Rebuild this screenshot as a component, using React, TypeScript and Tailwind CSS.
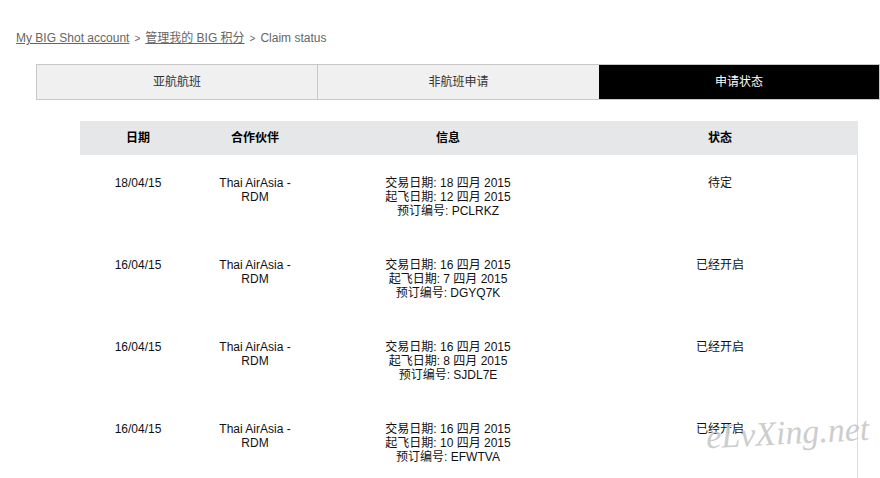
const FONT = { fontFamily: '"Liberation Sans", Arial, "Noto Sans CJK SC", sans-serif' };

const rows = [
  { date: '18/04/15', trade: '18 四月 2015', fly: '12 四月 2015', ref: 'PCLRKZ', status: '待定' },
  { date: '16/04/15', trade: '16 四月 2015', fly: '7 四月 2015', ref: 'DGYQ7K', status: '已经开启' },
  { date: '16/04/15', trade: '16 四月 2015', fly: '8 四月 2015', ref: 'SJDL7E', status: '已经开启' },
  { date: '16/04/15', trade: '16 四月 2015', fly: '10 四月 2015', ref: 'EFWTVA', status: '已经开启' },
];

export default function App() {
  return (
    <div className="relative w-[880px] h-[478px] overflow-hidden bg-white text-[12px] leading-[14px]" style={FONT}>
      <div className="pl-4 pt-[31px] text-[#666]">
        <span className="underline">My BIG Shot account</span>
        <span className="mx-[5px] text-[10px]">&gt;</span>
        <span className="underline">管理我的 BIG 积分</span>
        <span className="mx-[5px] text-[10px]">&gt;</span>
        <span>Claim status</span>
      </div>

      <div className="ml-9 mt-[18px] flex h-[36px] w-[844px] border border-[#c8c8c8]">
        <div className="flex w-[281px] items-center justify-center border-r border-[#c8c8c8] bg-[#f0f0f0] text-[#333]">亚航航班</div>
        <div className="flex w-[281px] items-center justify-center bg-[#f0f0f0] text-[#333]">非航班申请</div>
        <div className="flex flex-1 items-center justify-center bg-black text-white">申请状态</div>
      </div>

      <div className="ml-20 mt-[21px] w-[778px]">
        <div className="grid h-[34px] grid-cols-[116px_118px_268px_276px] items-center bg-[#e6e7e8] font-bold text-black">
          <div className="text-center">日期</div>
          <div className="text-center">合作伙伴</div>
          <div className="text-center">信息</div>
          <div className="text-center">状态</div>
        </div>
        <div className="border-r border-[#dcdcdc]">
          {rows.map((r, i) => (
            <div key={i} className="grid h-[82px] grid-cols-[116px_118px_268px_276px] pt-[21px] text-[#111]">
              <div className="text-center">{r.date}</div>
              <div className="text-center">Thai AirAsia -<br />RDM</div>
              <div className="text-center">
                交易日期: {r.trade}<br />
                起飞日期: {r.fly}<br />
                预订编号: {r.ref}
              </div>
              <div className="text-center">{r.status}</div>
            </div>
          ))}
        </div>
      </div>

      <div
        className="pointer-events-none absolute left-[706px] top-[426px] -rotate-3 text-[34px] italic text-[#c8c8c8] opacity-90"
        style={{ fontFamily: '"Liberation Serif", serif' }}
      >
        eLvXing.net
      </div>
    </div>
  );
}
